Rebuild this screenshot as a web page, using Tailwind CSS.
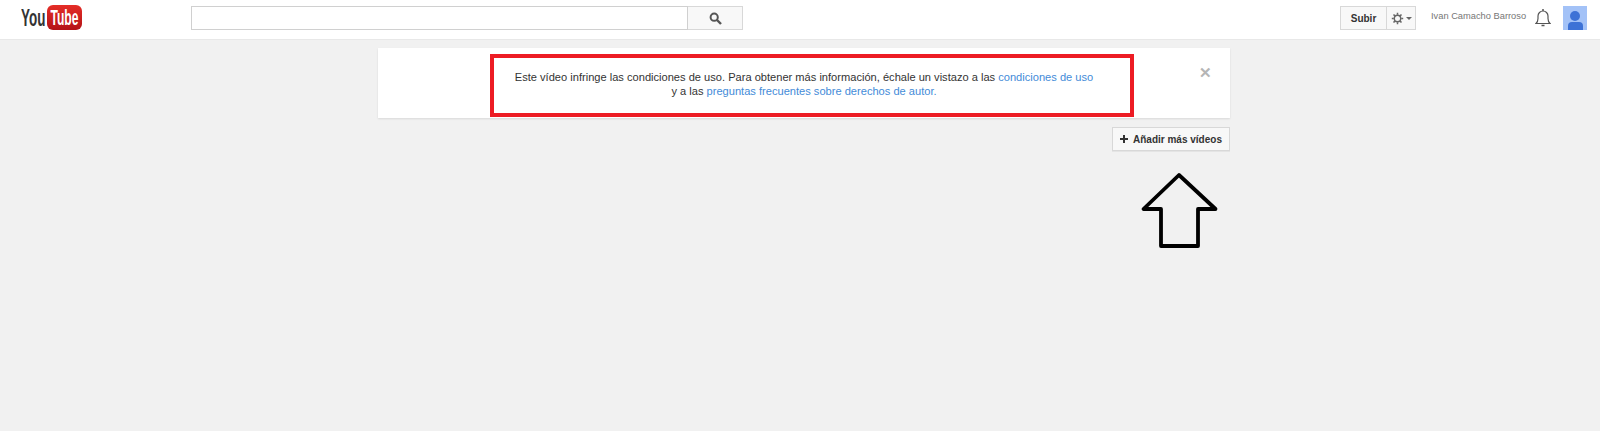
<!DOCTYPE html>
<html lang="es">
<head>
    <meta charset="UTF-8">
    <title>YouTube</title>
    <script src="https://cdn.jsdelivr.net/npm/@tailwindcss/browser@4"></script>
</head>
<body class="relative h-[431px] overflow-hidden bg-[#f1f1f1] font-['Liberation_Sans',Arial,sans-serif]">

    <!-- Header -->
    <header class="flex h-10 items-start border-b border-[#e8e8e8] bg-white pt-[6px]">
        <!-- Logo -->
        <div class="mt-[-1px] ml-[21px] flex h-[25px] w-[170px] items-center">
            <span class="w-[26px] origin-left scale-x-[.56] text-[24px] leading-none font-bold whitespace-nowrap text-[#333]">You</span>
            <span class="flex h-[25px] w-[35px] items-center justify-center rounded-[6px] bg-gradient-to-b from-[#e52d27] to-[#b31217]">
                <span class="scale-x-[.55] text-[22px] leading-none font-bold text-white">Tube</span>
            </span>
        </div>

        <!-- Search -->
        <div class="flex h-6 w-[552px]">
            <input class="h-6 w-[497px] border border-[#d0d0d0] bg-white" type="text" aria-label="Buscar">
            <button class="flex h-6 w-[55px] items-center justify-center border border-l-0 border-[#d8d8d8] bg-[#f8f8f8]" aria-label="Buscar">
                <svg width="13" height="13" viewBox="0 0 13 13" fill="none" stroke="#555">
                    <circle cx="5.2" cy="5.2" r="3.6" stroke-width="2"/>
                    <path d="M8 8l4 4" stroke-width="2.4"/>
                </svg>
            </button>
        </div>

        <!-- Right side -->
        <div class="ml-auto flex items-center">
            <button class="flex h-6 w-[47px] items-center justify-center border border-[#d8d8d8] bg-[#f8f8f8] text-[10px] font-bold text-[#333]">Subir</button>
            <button class="flex h-6 w-[29px] items-center justify-center gap-[2px] border border-l-0 border-[#d8d8d8] bg-[#f8f8f8]" aria-label="Ajustes">
                <svg width="13" height="13" viewBox="0 0 13 13" fill="none" stroke="#666">
                    <circle cx="6.5" cy="6.5" r="3.2" stroke-width="1.4"/>
                    <path d="M6.5 .8v2M6.5 10.2v2M.8 6.5h2M10.2 6.5h2M2.5 2.5l1.4 1.4M9.1 9.1l1.4 1.4M10.5 2.5L9.1 3.9M3.9 9.1l-1.4 1.4" stroke-width="1.5"/>
                </svg>
                <span class="h-0 w-0 border-x-[3px] border-t-[3px] border-x-transparent border-t-[#666]"></span>
            </button>
            <span class="mb-[2px] ml-[15px] w-[104px] text-[9.3px] whitespace-nowrap text-[#767676]">Ivan Camacho Barroso</span>
            <svg class="mb-[1px]" width="16" height="20" viewBox="0 0 16 20" fill="none" stroke="#555" stroke-width="1.2">
                <path d="M1 15.5h14c-1.6-1.4-2-2.6-2-5V8a5 5 0 0 0-10 0v2.5c0 2.4-.4 3.6-2 5z"/>
                <path d="M8 1v2M6.5 17.5h3" stroke-width="1.5"/>
            </svg>
            <div class="mr-[13px] ml-[12px] flex h-6 w-6 flex-col items-center justify-end overflow-hidden bg-[#a3c2f7]">
                <span class="mb-[1px] h-[10px] w-[10px] rounded-full bg-[#3d72d6]"></span>
                <span class="h-[8px] w-[15px] rounded-t-[4px] bg-[#3d72d6]"></span>
            </div>
        </div>
    </header>

    <!-- Main -->
    <main class="ml-[378px] w-[852px]">
        <!-- Notice card -->
        <div class="relative mt-2 h-[70px] bg-white shadow-[0_1px_2px_rgba(0,0,0,.1)]">
            <div class="absolute top-[6px] left-[112px] flex h-[63px] w-[644px] items-center justify-center border-4 border-[#ed1c24] pr-[16px] pb-[4px] text-center text-[11.1px] leading-[14px] text-[#333]">
                <p>Este vídeo infringe las condiciones de uso. Para obtener más información, échale un vistazo a las <a class="text-[#438bd8]" href="#">condiciones de uso</a><br>y a las <a class="text-[#438bd8]" href="#">preguntas frecuentes sobre derechos de autor.</a></p>
            </div>
            <span class="absolute top-[17px] right-[18px] text-[15px] leading-none font-bold text-[#b5b5b5]">✕</span>
        </div>

        <div class="mt-[9px] flex justify-end">
            <button class="flex h-6 w-[118px] items-center justify-center gap-[5px] border border-[#d8d8d8] bg-[#f8f8f8] text-[10px] font-bold text-[#333] shadow-[0_1px_0_rgba(0,0,0,.05)]">
                <svg width="8" height="8" viewBox="0 0 8 8" stroke="#333" stroke-width="2"><path d="M4 0v8M0 4h8"/></svg>
                Añadir más vídeos
            </button>
        </div>
    </main>

    <!-- Hand-drawn arrow annotation -->
    <svg class="absolute top-[170px] left-[1138px]" width="84" height="80" viewBox="0 0 84 80" fill="none" stroke="#000" stroke-width="3.8" stroke-linejoin="round">
        <path d="M41 5L5.5 39H23v37h37V39h17.5z"/>
    </svg>
</body>
</html>
